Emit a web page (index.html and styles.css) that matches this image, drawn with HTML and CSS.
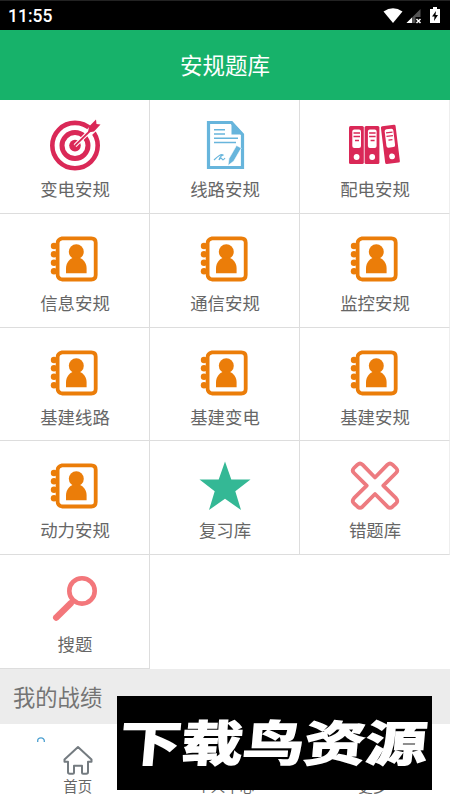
FILE: index.html
```html
<!DOCTYPE html>
<html lang="zh-CN">
<head>
<meta charset="utf-8">
<title>安规题库</title>
<link rel="stylesheet" href="styles.css">
</head>
<body>
<svg class="defs" aria-hidden="true">
  <symbol id="book" viewBox="0 0 50 50">
    <g fill="#eb7d09"><circle cx="4" cy="12" r="3.2"/><circle cx="4" cy="20.3" r="3.2"/><circle cx="4" cy="28.8" r="3.2"/><circle cx="4" cy="37.3" r="3.2"/><path d="M4 10.5h5v3H4zM4 18.8h5v3H4zM4 27.3h5v3H4zM4 35.8h5v3H4z"/></g>
    <path d="M12 4.300h29.300q4.400 0 4.400 4.400v32.400q0 4.400-4.400 4.400H12q-4.400-1-4.400-5V9.300q0-4 4.400-5z" fill="#fff" stroke="#eb7d09" stroke-width="3.800" stroke-linejoin="round"/>
    <circle cx="26.3" cy="17.7" r="7.5" fill="#eb7d09"/>
    <path d="M16 39.3v-5c0-5 3-9 7-10.5h6.6c4 1.500 7 5.500 7 10.500v5z" fill="#eb7d09"/>
  </symbol>
</svg>
<div class="screen">
  <div class="status">
    <span>11:55</span>
    <svg width="60" height="20" viewBox="0 0 60 20">
      <path d="M.5 5.500Q10 -1 19.500 5.500L10 17z" fill="#fff"/>
      <path d="M37.500 3v8h-5v6H23.500z" fill="#555"/><path d="M29 11.500V17h-5.500z" fill="#fff"/>
      <path d="M33.500 13l4 4m0-4l-4 4" stroke="#fff" stroke-width="1.500"/>
      <path d="M47 3h3V1h4v2h3v14H47z" fill="#fff"/><path d="M53 5l-4 5.500h2.500L51 15l4-6h-2.500z" fill="#000"/>
    </svg>
  </div>
  <header>安规题库</header>
  <main class="grid">
    <div class="cell"><svg class="icon" viewBox="0 0 50 50"><circle cx="25" cy="25.600" r="22.700" fill="none" stroke="#da2857" stroke-width="4.600"/><circle cx="25" cy="25.600" r="13" fill="none" stroke="#da2857" stroke-width="5"/><circle cx="25" cy="25.600" r="5.800" fill="#da2857"/><path d="M25 25.600L49 2" stroke="#fff" stroke-width="4"/><path d="M36 10.500l9-10 1 5 5 1-9 8.500-5 .5z" fill="#fff"/><path d="M25 25.600L45 6" stroke="#da2857" stroke-width="1.800"/><path d="M38 12.500l1-6 7-7 .5 4.500 4 .5-6.500 7z" fill="#da2857"/></svg><span>变电安规</span></div>
    <div class="cell"><svg class="icon" viewBox="0 0 50 50"><path d="M8.500 2.500h23l11 12v33h-34z" fill="#fff" stroke="#67b5dc" stroke-width="3.200"/><path d="M31.500 1l12.500 13.500H31.500z" fill="#67b5dc"/><path d="M14 9.700h11M14 14h11M14 18.300h24M14 22.600h22" stroke="#67b5dc" stroke-width="1.500"/><path d="M14 40q7-7 9-5-3 1-4 5 2-3 3-1t3-1" fill="none" stroke="#67b5dc" stroke-width="1.200"/><path d="M28 45.500l1-7 7.500-13 4.800 2.600-7.500 13z" fill="#67b5dc" stroke="#fff" stroke-width=".6"/></svg><span>线路安规</span></div>
    <div class="cell"><svg class="icon" viewBox="0 0 50 50"><g id="binder"><rect x="-1" y="6" width="14.800" height="38" rx="1.500" fill="#da2857"/><rect x="2.300" y="9.500" width="8.700" height="18.500" rx="2" fill="#fff"/><path d="M3.500 13h6.500M3.500 16.500h6.500M5 20.500h4" stroke="#da2857" stroke-width="1.400"/><circle cx="6.600" cy="37" r="2.900" fill="#fff"/></g><use href="#binder" x="15.600"/><use href="#binder" transform="translate(34 -.5) rotate(-7 6 25)"/></svg><span>配电安规</span></div>
    <div class="cell"><svg class="icon"><use href="#book"/></svg><span>信息安规</span></div>
    <div class="cell"><svg class="icon"><use href="#book"/></svg><span>通信安规</span></div>
    <div class="cell"><svg class="icon"><use href="#book"/></svg><span>监控安规</span></div>
    <div class="cell"><svg class="icon"><use href="#book"/></svg><span>基建线路</span></div>
    <div class="cell"><svg class="icon"><use href="#book"/></svg><span>基建变电</span></div>
    <div class="cell"><svg class="icon"><use href="#book"/></svg><span>基建安规</span></div>
    <div class="cell"><svg class="icon"><use href="#book"/></svg><span>动力安规</span></div>
    <div class="cell"><svg class="icon" viewBox="0 0 50 50"><path d="M25 .5l6.300 18.100h19.200L35.300 30.200 41 49 25 37.800 9 49l5.700-18.800L-.5 18.600h19.200z" fill="#34b895"/></svg><span>复习库</span></div>
    <div class="cell"><svg class="icon" viewBox="0 0 50 50"><path d="M25 16.500L37.500 3.600Q40 1.500 42.500 3.600L46 7Q48.500 9.500 46 12L33.300 24.600 46 37.200Q48.500 40 46 42.500L42.500 45.700Q40 47.800 37.500 45.700L25 33 12.500 45.700Q10 47.800 7.500 45.700L4 42.500Q1.500 40 4 37.200L16.700 24.600 4 12Q1.500 9.500 4 7L7.500 3.600Q10 1.500 12.500 3.600z" fill="none" stroke="#ed7b80" stroke-width="3.800" stroke-linejoin="round"/></svg><span>错题库</span></div>
    <div class="cell"><svg class="icon" viewBox="0 0 50 50"><circle cx="32" cy="15.900" r="12.700" fill="none" stroke="#f3777b" stroke-width="4.600"/><path d="M23 25.500l-3 3" stroke="#f3777b" stroke-width="4"/><path d="M20.500 28.500L6.300 42.500" stroke="#f3777b" stroke-width="6.600" stroke-linecap="round"/></svg><span>搜题</span></div>
  </main>
  <section class="record">我的战绩</section>
  <div class="peek"><svg width="8" height="5" viewBox="0 0 8 5"><path d="M.7 5V3.800a3.300 2.900 0 0 1 6.600 0V5" fill="none" stroke="#4a9fd0" stroke-width="1.300"/></svg></div>
  <nav>
    <div class="tab"><svg width="32" height="31" viewBox="0 0 32 31"><path d="M16 2L2.500 14.500v2.200H6V27q0 1.700 1.700 1.700H11q1 0 1-1v-7h8v7q0 1 1 1h3.300q1.700 0 1.700-1.700V16.700h3.500v-2.200z" fill="none" stroke="#747b80" stroke-width="2" stroke-linejoin="round"/></svg><span>首页</span></div>
    <div class="tab"><span>个人中心</span></div>
    <div class="tab"><span>更多</span></div>
  </nav>
  <div class="banner"><span>下载鸟资源</span></div>
</div>
</body>
</html>
```
FILE: styles.css
```css
* { box-sizing: border-box; }
body { margin: 0; background: #fff; font-family: "Noto Sans CJK SC", sans-serif; color: #666; }
.defs { position: absolute; width: 0; height: 0; }
.screen { position: relative; width: 450px; height: 800px; overflow: hidden; display: flex; flex-direction: column; }
.status { flex: none; height: 30px; background: #000; border-top: 1px solid #222; color: #fff; display: flex; align-items: center; justify-content: space-between; padding: 2px 7px 0 8px; font: 500 17.500px/27px Roboto, sans-serif; }
.status svg { margin-bottom: 2px; }
header { flex: none; height: 70px; background: #17b26a; color: #fff; font-size: 22.500px; line-height: 69px; text-align: center; }
.grid { flex: none; display: grid; grid-template-columns: repeat(3, 150px); grid-template-rows: repeat(5, 113.750px); }
.cell { display: flex; flex-direction: column; align-items: center; padding: 20px 0 0 1px; border-right: 1px solid #ddd; border-bottom: 1px solid #ddd; }
.cell:nth-child(3n) { border-right-color: #eee; }
.icon { width: 50px; height: 50px; overflow: visible; flex: none; }
.cell span { font-size: 17.400px; line-height: 24px; margin-top: 7px; }
.record { flex: none; height: 55px; background: #ececec; color: #747474; font-size: 22.300px; line-height: 55px; padding-left: 13px; }
.peek { flex: none; height: 18px; padding: 13px 0 0 37px; display: flex; align-items: flex-start; }
nav { flex: none; display: grid; grid-template-columns: repeat(3, 147.500px); padding-left: 4px; height: 58px; }
.tab { display: flex; flex-direction: column; align-items: center; justify-content: flex-end; height: 54px; font-size: 14.400px; line-height: 20px; }
.banner { position: absolute; left: 117px; top: 696px; width: 315px; height: 94px; background: #000; color: #fff; display: flex; align-items: center; justify-content: center; }
.banner span { font-size: 48px; font-weight: 700; line-height: 94px; white-space: nowrap; transform: translate(0, -3px) scaleX(1.280) skewX(-4deg); -webkit-text-stroke: 1.600px #fff; }
```
